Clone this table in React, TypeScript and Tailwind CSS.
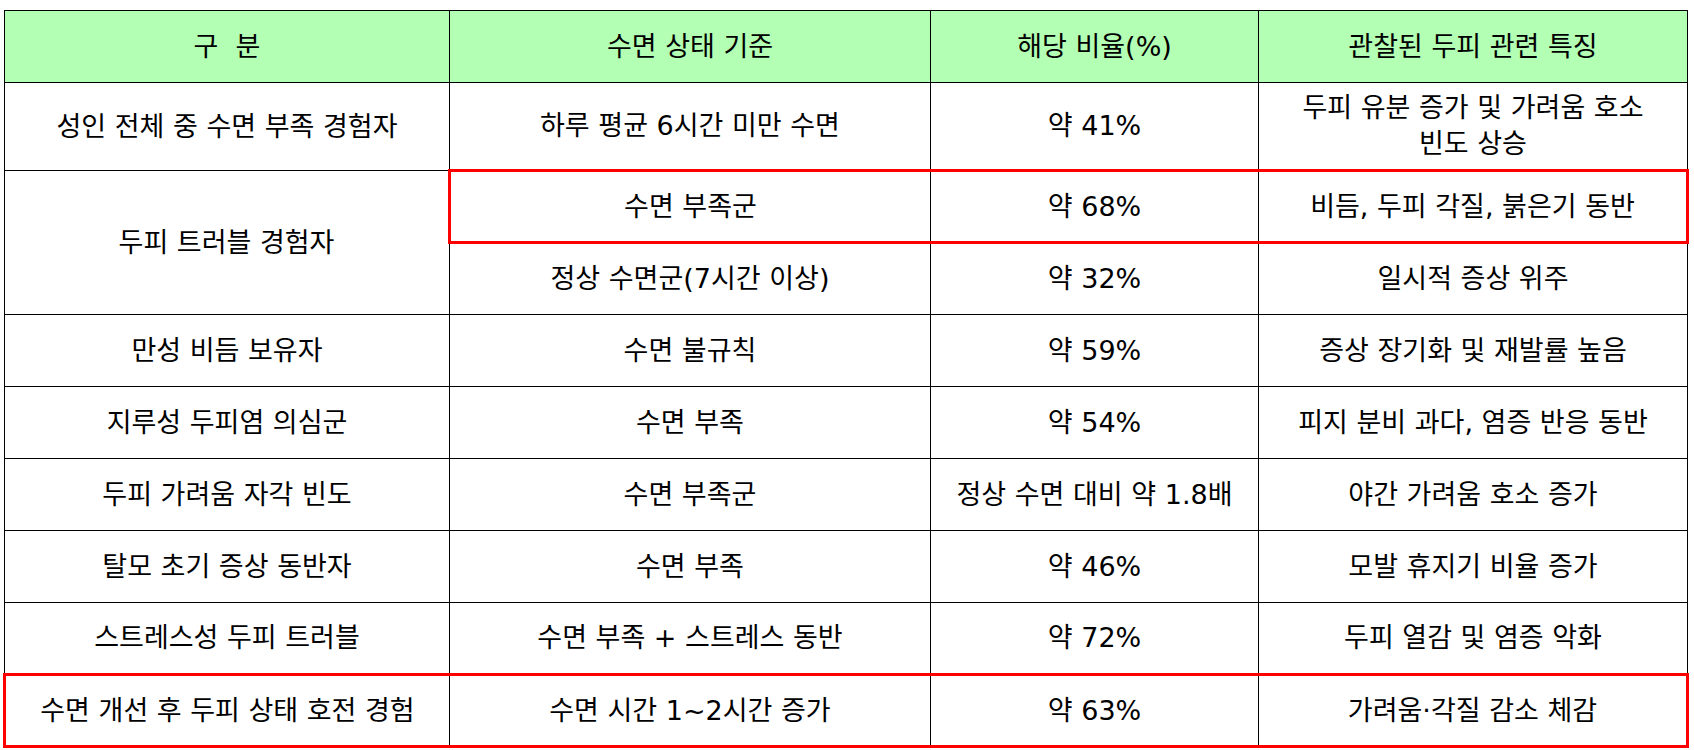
type Row = {
  group: string;
  basis: string;
  ratio: string;
  feature: React.ReactNode;
};

const rows: Row[] = [
  { group: '만성 비듬 보유자', basis: '수면 불규칙', ratio: '약 59%', feature: '증상 장기화 및 재발률 높음' },
  { group: '지루성 두피염 의심군', basis: '수면 부족', ratio: '약 54%', feature: '피지 분비 과다, 염증 반응 동반' },
  { group: '두피 가려움 자각 빈도', basis: '수면 부족군', ratio: '정상 수면 대비 약 1.8배', feature: '야간 가려움 호소 증가' },
  { group: '탈모 초기 증상 동반자', basis: '수면 부족', ratio: '약 46%', feature: '모발 휴지기 비율 증가' },
  { group: '스트레스성 두피 트러블', basis: '수면 부족 + 스트레스 동반', ratio: '약 72%', feature: '두피 열감 및 염증 악화' },
];

const td = 'border border-black p-0 text-center align-middle';
const red = 'border-y-[3px] border-y-[#ff0000]';

export default function App() {
  return (
    <div className="min-h-screen bg-white pl-[3px] pt-[10px]">
      <table
        className="table-fixed border-collapse text-[27px] leading-[36px] text-black"
        style={{ fontFamily: '"DejaVu Sans", "Noto Sans CJK KR", sans-serif', width: 1683 }}
      >
        <colgroup>
          <col className="w-[445px]" />
          <col className="w-[481px]" />
          <col className="w-[328px]" />
          <col className="w-[429px]" />
        </colgroup>
        <thead>
          <tr className="bg-[#b3ffb3]">
            <th className={`${td} h-[72px] font-normal whitespace-pre`}>구  분</th>
            <th className={`${td} font-normal`}>수면 상태 기준</th>
            <th className={`${td} font-normal`}>해당 비율(%)</th>
            <th className={`${td} font-normal`}>관찰된 두피 관련 특징</th>
          </tr>
        </thead>
        <tbody>
          <tr>
            <td className={`${td} h-[88px]`}>성인 전체 중 수면 부족 경험자</td>
            <td className={td}>하루 평균 6시간 미만 수면</td>
            <td className={td}>약 41%</td>
            <td className={td}>
              두피 유분 증가 및 가려움 호소
              <br />
              빈도 상승
            </td>
          </tr>
          <tr>
            <td rowSpan={2} className={td}>
              두피 트러블 경험자
            </td>
            <td className={`${td} ${red} h-[72px] border-l-[3px] border-l-[#ff0000]`}>수면 부족군</td>
            <td className={`${td} ${red}`}>약 68%</td>
            <td className={`${td} ${red} border-r-[3px] border-r-[#ff0000]`}>비듬, 두피 각질, 붉은기 동반</td>
          </tr>
          <tr>
            <td className={`${td} h-[72px]`}>정상 수면군(7시간 이상)</td>
            <td className={td}>약 32%</td>
            <td className={td}>일시적 증상 위주</td>
          </tr>
          {rows.map((r) => (
            <tr key={r.group}>
              <td className={`${td} h-[72px]`}>{r.group}</td>
              <td className={td}>{r.basis}</td>
              <td className={td}>{r.ratio}</td>
              <td className={td}>{r.feature}</td>
            </tr>
          ))}
          <tr>
            <td className={`${td} ${red} h-[72px] border-l-[3px] border-l-[#ff0000]`}>수면 개선 후 두피 상태 호전 경험</td>
            <td className={`${td} ${red}`}>수면 시간 1~2시간 증가</td>
            <td className={`${td} ${red}`}>약 63%</td>
            <td className={`${td} ${red} border-r-[3px] border-r-[#ff0000]`}>가려움·각질 감소 체감</td>
          </tr>
        </tbody>
      </table>
    </div>
  );
}
